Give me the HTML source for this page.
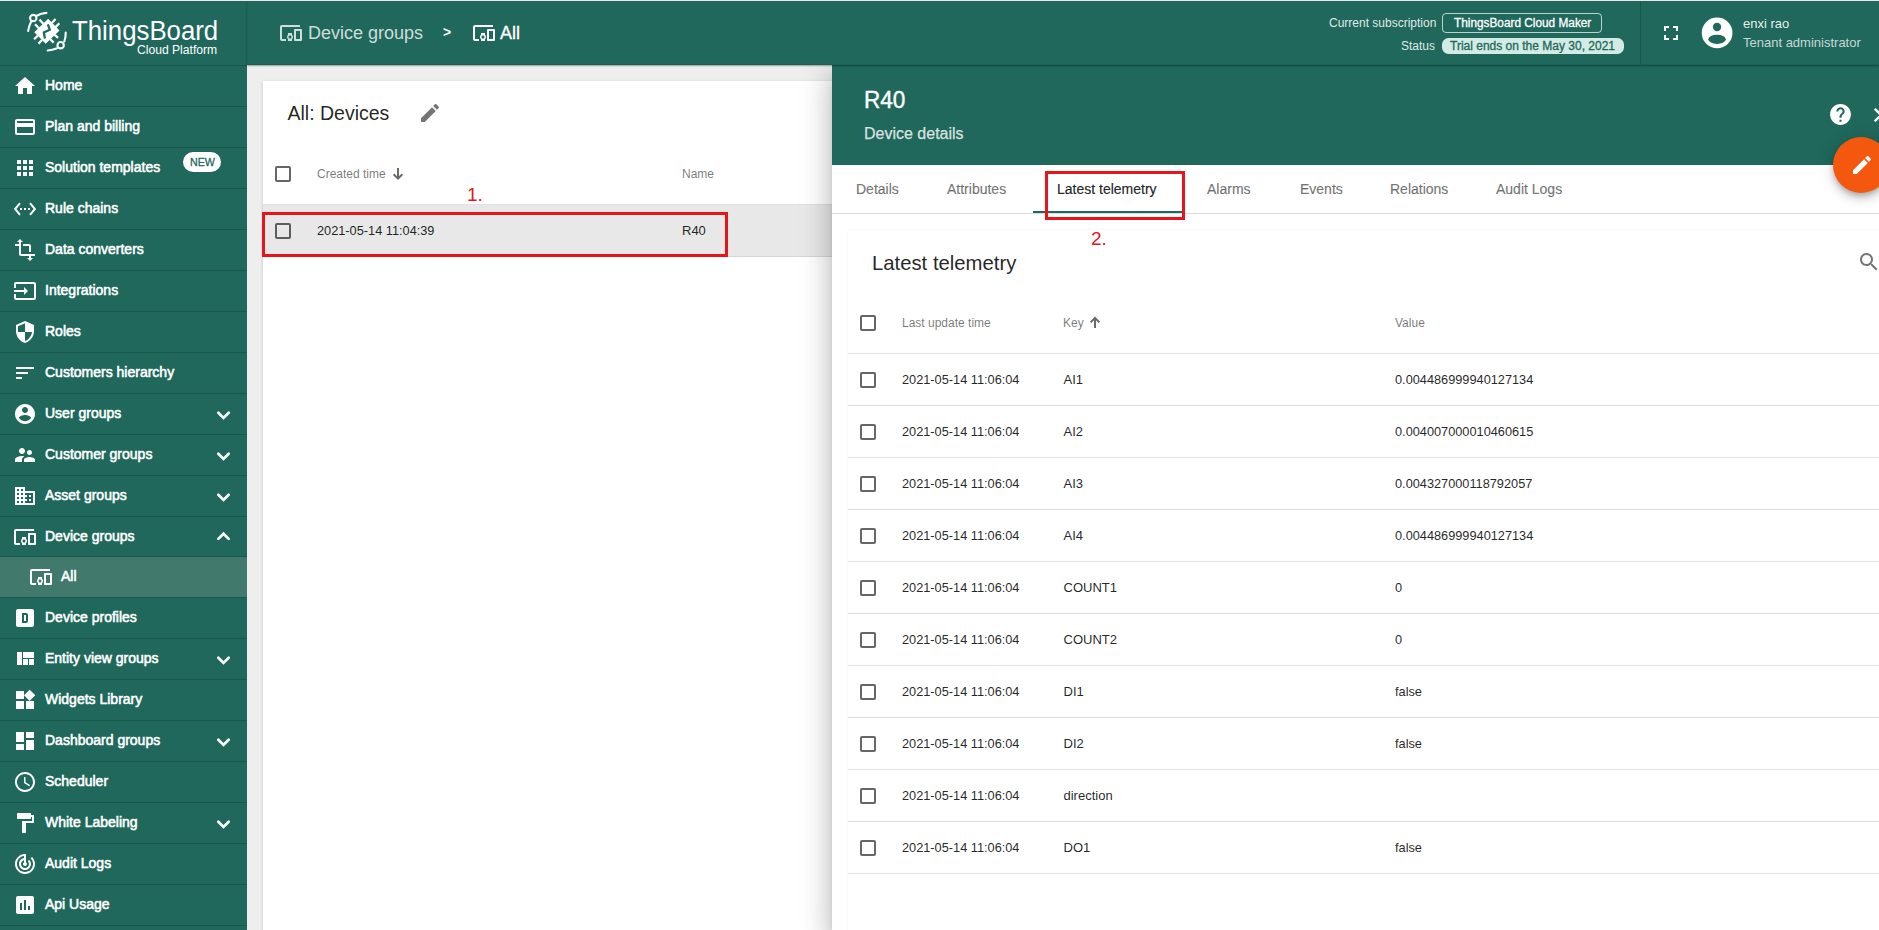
<!DOCTYPE html>
<html><head><meta charset="utf-8">
<style>
*{box-sizing:border-box;margin:0;padding:0}
html,body{width:1879px;height:930px;overflow:hidden;background:#eeeeee;font-family:"Liberation Sans",sans-serif;position:relative}
.tx{position:absolute;line-height:1;white-space:nowrap}
.ic{position:absolute;display:block}
.bx{position:absolute}
</style></head>
<body>

<div class="bx" style="left:0;top:65px;width:247px;height:865px;background:#1f685b"></div>
<svg class="ic" style="left:13px;top:73.5px;width:24px;height:24px;" viewBox="0 0 24 24"><path fill="#fff" fill-rule="evenodd" d="M10 20v-6h4v6h5v-8h3L12 3 2 12h3v8z"/></svg>
<div class="tx" style="left:45px;top:78.35px;font-size:14px;color:#fff;-webkit-text-stroke:0.55px #fff;">Home</div>
<div class="bx" style="left:0;top:65px;width:247px;height:1px;background:#19574c"></div>
<svg class="ic" style="left:13px;top:114.5px;width:24px;height:24px;" viewBox="0 0 24 24"><path fill="#fff" fill-rule="evenodd" d="M20 4H4c-1.11 0-1.99.89-1.99 2L2 18c0 1.11.89 2 2 2h16c1.11 0 2-.89 2-2V6c0-1.11-.89-2-2-2zm0 14H4v-6h16v6zm0-10H4V6h16v2z"/></svg>
<div class="tx" style="left:45px;top:119.35px;font-size:14px;color:#fff;-webkit-text-stroke:0.55px #fff;">Plan and billing</div>
<div class="bx" style="left:0;top:106px;width:247px;height:1px;background:#19574c"></div>
<svg class="ic" style="left:13px;top:155.5px;width:24px;height:24px;" viewBox="0 0 24 24"><path fill="#fff" fill-rule="evenodd" d="M4 8h4V4H4v4zm6 12h4v-4h-4v4zm-6 0h4v-4H4v4zm0-6h4v-4H4v4zm6 0h4v-4h-4v4zm6-10v4h4V4h-4zm-6 4h4V4h-4v4zm6 6h4v-4h-4v4zm0 6h4v-4h-4v4z"/></svg>
<div class="tx" style="left:45px;top:160.35px;font-size:14px;color:#fff;-webkit-text-stroke:0.55px #fff;">Solution templates</div>
<div class="bx" style="left:0;top:147px;width:247px;height:1px;background:#19574c"></div>
<div class="bx" style="left:183px;top:152px;width:38px;height:20px;background:#fff;border-radius:10px"></div>
<div class="tx" style="left:190px;top:157.07px;font-size:11.5px;color:#1f685b;-webkit-text-stroke:0.3px #1f685b;transform:scaleX(0.93);transform-origin:0 0;">NEW</div>
<svg class="ic" style="left:13px;top:196.5px;width:24px;height:24px;" viewBox="0 0 24 24"><path fill="#fff" fill-rule="evenodd" d="M7.77 6.76L6.23 5.48.82 12l5.41 6.52 1.54-1.28L3.42 12l4.35-5.24zM7 13h2v-2H7v2zm10-2h-2v2h2v-2zm-6 2h2v-2h-2v2zm6.77-7.52l-1.54 1.28L20.58 12l-4.35 5.24 1.54 1.28L23.18 12l-5.41-6.52z"/></svg>
<div class="tx" style="left:45px;top:201.35px;font-size:14px;color:#fff;-webkit-text-stroke:0.55px #fff;">Rule chains</div>
<div class="bx" style="left:0;top:188px;width:247px;height:1px;background:#19574c"></div>
<svg class="ic" style="left:13px;top:237.5px;width:24px;height:24px;" viewBox="0 0 24 24"><path fill="#fff" fill-rule="evenodd" d="M22 18v-2H8V4h2L7 1 4 4h2v2H2v2h4v8c0 1.1.9 2 2 2h8v2h-2l3 3 3-3h-2v-2h4zM10 8h6v6h2V8c0-1.1-.9-2-2-2h-6v2z"/></svg>
<div class="tx" style="left:45px;top:242.35px;font-size:14px;color:#fff;-webkit-text-stroke:0.55px #fff;">Data converters</div>
<div class="bx" style="left:0;top:229px;width:247px;height:1px;background:#19574c"></div>
<svg class="ic" style="left:13px;top:278.5px;width:24px;height:24px;" viewBox="0 0 24 24"><path fill="#fff" fill-rule="evenodd" d="M21 3.01H3c-1.1 0-2 .9-2 2V9h2V4.99h18v14.03H3V15H1v4.01c0 1.1.9 1.98 2 1.98h18c1.1 0 2-.88 2-1.98v-14c0-1.11-.9-2-2-2zM11 16l4-4-4-4v3H1v2h10v3z"/></svg>
<div class="tx" style="left:45px;top:283.35px;font-size:14px;color:#fff;-webkit-text-stroke:0.55px #fff;">Integrations</div>
<div class="bx" style="left:0;top:270px;width:247px;height:1px;background:#19574c"></div>
<svg class="ic" style="left:13px;top:319.5px;width:24px;height:24px;" viewBox="0 0 24 24"><path fill="#fff" fill-rule="evenodd" d="M12 1L3 5v6c0 5.55 3.84 10.74 9 12 5.16-1.26 9-6.45 9-12V5l-9-4zm0 10.99h7c-.53 4.12-3.28 7.79-7 8.94V12H5V6.3l7-3.11v8.8z"/></svg>
<div class="tx" style="left:45px;top:324.35px;font-size:14px;color:#fff;-webkit-text-stroke:0.55px #fff;">Roles</div>
<div class="bx" style="left:0;top:311px;width:247px;height:1px;background:#19574c"></div>
<svg class="ic" style="left:13px;top:360.5px;width:24px;height:24px;" viewBox="0 0 24 24"><path fill="#fff" fill-rule="evenodd" d="M3 18h6v-2H3v2zM3 6v2h18V6H3zm0 7h12v-2H3v2z"/></svg>
<div class="tx" style="left:45px;top:365.35px;font-size:14px;color:#fff;-webkit-text-stroke:0.55px #fff;">Customers hierarchy</div>
<div class="bx" style="left:0;top:352px;width:247px;height:1px;background:#19574c"></div>
<svg class="ic" style="left:13px;top:401.5px;width:24px;height:24px;" viewBox="0 0 24 24"><path fill="#fff" fill-rule="evenodd" d="M12 2C6.48 2 2 6.48 2 12s4.48 10 10 10 10-4.48 10-10S17.52 2 12 2zm0 3c1.66 0 3 1.34 3 3s-1.34 3-3 3-3-1.34-3-3 1.34-3 3-3zm0 14.2c-2.5 0-4.71-1.28-6-3.22.03-1.99 4-3.08 6-3.08 1.99 0 5.97 1.09 6 3.08-1.29 1.94-3.5 3.22-6 3.22z"/></svg>
<div class="tx" style="left:45px;top:406.35px;font-size:14px;color:#fff;-webkit-text-stroke:0.55px #fff;">User groups</div>
<div class="bx" style="left:0;top:393px;width:247px;height:1px;background:#19574c"></div>
<svg class="ic" style="left:211px;top:401.5px;width:24px;height:24px" viewBox="0 0 24 24"><polyline points="7.3,10.7 12.5,15.9 17.7,10.7" fill="none" stroke="#fff" stroke-width="2.7" stroke-linecap="round" stroke-linejoin="miter"/></svg>
<svg class="ic" style="left:13px;top:442.5px;width:24px;height:24px;" viewBox="0 0 24 24"><path fill="#fff" fill-rule="evenodd" d="M16.5 12c1.38 0 2.49-1.12 2.49-2.5S17.88 7 16.5 7C15.12 7 14 8.12 14 9.5s1.12 2.5 2.5 2.5zM9 11c1.66 0 2.99-1.34 2.99-3S10.66 5 9 5C7.34 5 6 6.34 6 8s1.34 3 3 3zm7.5 3c-1.83 0-5.5.92-5.5 2.75V19h11v-2.25c0-1.83-3.67-2.75-5.5-2.75zM9 13c-2.33 0-7 1.17-7 3.5V19h7v-2.25c0-.85.33-2.34 2.37-3.47C10.5 13.1 9.66 13 9 13z"/></svg>
<div class="tx" style="left:45px;top:447.35px;font-size:14px;color:#fff;-webkit-text-stroke:0.55px #fff;">Customer groups</div>
<div class="bx" style="left:0;top:434px;width:247px;height:1px;background:#19574c"></div>
<svg class="ic" style="left:211px;top:442.5px;width:24px;height:24px" viewBox="0 0 24 24"><polyline points="7.3,10.7 12.5,15.9 17.7,10.7" fill="none" stroke="#fff" stroke-width="2.7" stroke-linecap="round" stroke-linejoin="miter"/></svg>
<svg class="ic" style="left:13px;top:483.5px;width:24px;height:24px;" viewBox="0 0 24 24"><path fill="#fff" fill-rule="evenodd" d="M12 7V3H2v18h20V7H12zM6 19H4v-2h2v2zm0-4H4v-2h2v2zm0-4H4V9h2v2zm0-4H4V5h2v2zm4 12H8v-2h2v2zm0-4H8v-2h2v2zm0-4H8V9h2v2zm0-4H8V5h2v2zm10 12h-8v-2h2v-2h-2v-2h2v-2h-2V9h8v10zm-2-8h-2v2h2v-2zm0 4h-2v2h2v-2z"/></svg>
<div class="tx" style="left:45px;top:488.35px;font-size:14px;color:#fff;-webkit-text-stroke:0.55px #fff;">Asset groups</div>
<div class="bx" style="left:0;top:475px;width:247px;height:1px;background:#19574c"></div>
<svg class="ic" style="left:211px;top:483.5px;width:24px;height:24px" viewBox="0 0 24 24"><polyline points="7.3,10.7 12.5,15.9 17.7,10.7" fill="none" stroke="#fff" stroke-width="2.7" stroke-linecap="round" stroke-linejoin="miter"/></svg>
<svg class="ic" style="left:13px;top:524.5px;width:24px;height:24px;" viewBox="0 0 24 24"><path fill="#fff" fill-rule="evenodd" d="M3 6h18V4H3c-1.1 0-2 .9-2 2v12c0 1.1.9 2 2 2h4v-2H3V6zm10 6H9v1.78c-.61.55-1 1.33-1 2.22s.39 1.67 1 2.22V20h4v-1.78c.61-.55 1-1.34 1-2.22s-.39-1.67-1-2.22V12zm-2 5.5c-.83 0-1.5-.67-1.5-1.5s.67-1.5 1.5-1.5 1.5.67 1.5 1.5-.67 1.5-1.5 1.5zM22 8h-6c-.5 0-1 .5-1 1v10c0 .5.5 1 1 1h6c.5 0 1-.5 1-1V9c0-.5-.5-1-1-1zm-1 10h-4v-8h4v8z"/></svg>
<div class="tx" style="left:45px;top:529.35px;font-size:14px;color:#fff;-webkit-text-stroke:0.55px #fff;">Device groups</div>
<div class="bx" style="left:0;top:516px;width:247px;height:1px;background:#19574c"></div>
<svg class="ic" style="left:211px;top:524.5px;width:24px;height:24px" viewBox="0 0 24 24"><polyline points="7.3,13.9 12.5,8.7 17.7,13.9" fill="none" stroke="#fff" stroke-width="2.7" stroke-linecap="round" stroke-linejoin="miter"/></svg>
<div class="bx" style="left:0;top:557px;width:247px;height:40px;background:#41796d"></div>
<svg class="ic" style="left:28.5px;top:564.5px;width:24px;height:24px;" viewBox="0 0 24 24"><path fill="#fff" fill-rule="evenodd" d="M3 6h18V4H3c-1.1 0-2 .9-2 2v12c0 1.1.9 2 2 2h4v-2H3V6zm10 6H9v1.78c-.61.55-1 1.33-1 2.22s.39 1.67 1 2.22V20h4v-1.78c.61-.55 1-1.34 1-2.22s-.39-1.67-1-2.22V12zm-2 5.5c-.83 0-1.5-.67-1.5-1.5s.67-1.5 1.5-1.5 1.5.67 1.5 1.5-.67 1.5-1.5 1.5zM22 8h-6c-.5 0-1 .5-1 1v10c0 .5.5 1 1 1h6c.5 0 1-.5 1-1V9c0-.5-.5-1-1-1zm-1 10h-4v-8h4v8z"/></svg>
<div class="tx" style="left:61px;top:569.15px;font-size:14px;color:#fff;-webkit-text-stroke:0.55px #fff;">All</div>
<div class="bx" style="left:0;top:556px;width:247px;height:1px;background:#19574c"></div>
<svg class="ic" style="left:13px;top:605.5px;width:24px;height:24px;" viewBox="0 0 24 24"><path fill="#fff" fill-rule="evenodd" d="M5 3h14a2 2 0 0 1 2 2v14a2 2 0 0 1-2 2H5a2 2 0 0 1-2-2V5a2 2 0 0 1 2-2zM9 7v10h4a2 2 0 0 0 2-2V9a2 2 0 0 0-2-2H9zm2 2h2v6h-2V9z"/></svg>
<div class="tx" style="left:45px;top:610.35px;font-size:14px;color:#fff;-webkit-text-stroke:0.55px #fff;">Device profiles</div>
<div class="bx" style="left:0;top:597px;width:247px;height:1px;background:#19574c"></div>
<svg class="ic" style="left:13px;top:646.5px;width:24px;height:24px;" viewBox="0 0 24 24"><path fill="#fff" fill-rule="evenodd" d="M10 18h5v-6h-5v6zm-6 0h5V5H4v13zm12 0h5v-6h-5v6zM10 5v6h11V5H10z"/></svg>
<div class="tx" style="left:45px;top:651.35px;font-size:14px;color:#fff;-webkit-text-stroke:0.55px #fff;">Entity view groups</div>
<div class="bx" style="left:0;top:638px;width:247px;height:1px;background:#19574c"></div>
<svg class="ic" style="left:211px;top:646.5px;width:24px;height:24px" viewBox="0 0 24 24"><polyline points="7.3,10.7 12.5,15.9 17.7,10.7" fill="none" stroke="#fff" stroke-width="2.7" stroke-linecap="round" stroke-linejoin="miter"/></svg>
<svg class="ic" style="left:13px;top:687.5px;width:24px;height:24px;" viewBox="0 0 24 24"><path fill="#fff" fill-rule="evenodd" d="M13 13v8h8v-8h-8zM3 21h8v-8H3v8zM3 3v8h8V3H3zm13.66-1.31L11 7.34 16.66 13l5.66-5.66-5.66-5.65z"/></svg>
<div class="tx" style="left:45px;top:692.35px;font-size:14px;color:#fff;-webkit-text-stroke:0.55px #fff;">Widgets Library</div>
<div class="bx" style="left:0;top:679px;width:247px;height:1px;background:#19574c"></div>
<svg class="ic" style="left:13px;top:728.5px;width:24px;height:24px;" viewBox="0 0 24 24"><path fill="#fff" fill-rule="evenodd" d="M3 13h8V3H3v10zm0 8h8v-6H3v6zm10 0h8V11h-8v10zm0-18v6h8V3h-8z"/></svg>
<div class="tx" style="left:45px;top:733.35px;font-size:14px;color:#fff;-webkit-text-stroke:0.55px #fff;">Dashboard groups</div>
<div class="bx" style="left:0;top:720px;width:247px;height:1px;background:#19574c"></div>
<svg class="ic" style="left:211px;top:728.5px;width:24px;height:24px" viewBox="0 0 24 24"><polyline points="7.3,10.7 12.5,15.9 17.7,10.7" fill="none" stroke="#fff" stroke-width="2.7" stroke-linecap="round" stroke-linejoin="miter"/></svg>
<svg class="ic" style="left:13px;top:769.5px;width:24px;height:24px;" viewBox="0 0 24 24"><path fill="#fff" fill-rule="evenodd" d="M11.99 2C6.47 2 2 6.48 2 12s4.47 10 9.99 10C17.52 22 22 17.52 22 12S17.52 2 11.99 2zM12 20c-4.42 0-8-3.58-8-8s3.58-8 8-8 8 3.58 8 8-3.58 8-8 8zm.5-13H11v6l5.25 3.15.75-1.23-4.5-2.67z"/></svg>
<div class="tx" style="left:45px;top:774.35px;font-size:14px;color:#fff;-webkit-text-stroke:0.55px #fff;">Scheduler</div>
<div class="bx" style="left:0;top:761px;width:247px;height:1px;background:#19574c"></div>
<svg class="ic" style="left:13px;top:810.5px;width:24px;height:24px;" viewBox="0 0 24 24"><path fill="#fff" fill-rule="evenodd" d="M18 4V3c0-.55-.45-1-1-1H5c-.55 0-1 .45-1 1v4c0 .55.45 1 1 1h12c.55 0 1-.45 1-1V6h1v4H9v11c0 .55.45 1 1 1h2c.55 0 1-.45 1-1v-9h8V4h-3z"/></svg>
<div class="tx" style="left:45px;top:815.35px;font-size:14px;color:#fff;-webkit-text-stroke:0.55px #fff;">White Labeling</div>
<div class="bx" style="left:0;top:802px;width:247px;height:1px;background:#19574c"></div>
<svg class="ic" style="left:211px;top:810.5px;width:24px;height:24px" viewBox="0 0 24 24"><polyline points="7.3,10.7 12.5,15.9 17.7,10.7" fill="none" stroke="#fff" stroke-width="2.7" stroke-linecap="round" stroke-linejoin="miter"/></svg>
<svg class="ic" style="left:13px;top:851.5px;width:24px;height:24px;" viewBox="0 0 24 24"><path fill="#fff" fill-rule="evenodd" d="M19.07 4.93l-1.41 1.41C19.1 7.79 20 9.79 20 12c0 4.42-3.58 8-8 8s-8-3.58-8-8c0-4.08 3.05-7.44 7-7.93v2.02C8.16 6.57 6 9.03 6 12c0 3.31 2.69 6 6 6s6-2.69 6-6c0-1.66-.67-3.16-1.76-4.24l-1.41 1.41C15.55 9.9 16 10.9 16 12c0 2.21-1.79 4-4 4s-4-1.79-4-4c0-1.86 1.28-3.41 3-3.86v2.14c-.6.35-1 .98-1 1.72 0 1.1.9 2 2 2s2-.9 2-2c0-.74-.4-1.38-1-1.72V2h-1C6.48 2 2 6.48 2 12s4.48 10 10 10 10-4.48 10-10c0-2.76-1.12-5.26-2.93-7.07z"/></svg>
<div class="tx" style="left:45px;top:856.35px;font-size:14px;color:#fff;-webkit-text-stroke:0.55px #fff;">Audit Logs</div>
<div class="bx" style="left:0;top:843px;width:247px;height:1px;background:#19574c"></div>
<svg class="ic" style="left:13px;top:892.5px;width:24px;height:24px;" viewBox="0 0 24 24"><path fill="#fff" fill-rule="evenodd" d="M19 3H5c-1.1 0-2 .9-2 2v14c0 1.1.9 2 2 2h14c1.1 0 2-.9 2-2V5c0-1.1-.9-2-2-2zM9 17H7v-7h2v7zm4 0h-2V7h2v10zm4 0h-2v-4h2v4z"/></svg>
<div class="tx" style="left:45px;top:897.35px;font-size:14px;color:#fff;-webkit-text-stroke:0.55px #fff;">Api Usage</div>
<div class="bx" style="left:0;top:884px;width:247px;height:1px;background:#19574c"></div>
<div class="bx" style="left:0;top:925px;width:247px;height:1px;background:#19574c"></div>
<div class="bx" style="left:263px;top:81px;width:1640px;height:900px;background:#fff;box-shadow:0 1px 3px rgba(0,0,0,0.2)"></div>
<div class="tx" style="left:287.5px;top:104.49px;font-size:19.5px;color:rgba(0,0,0,0.87);font-weight:normal;">All: Devices</div>
<svg class="ic" style="left:418px;top:100.8px;width:24px;height:24px;" viewBox="0 0 24 24"><path fill="rgba(0,0,0,0.54)" fill-rule="evenodd" d="M3 17.25V21h3.75L17.81 9.94l-3.75-3.75L3 17.25zM20.71 7.04c.39-.39.39-1.02 0-1.41l-2.34-2.34c-.39-.39-1.02-.39-1.41 0l-1.83 1.83 3.75 3.75 1.83-1.83z"/></svg>
<div class="bx" style="left:275px;top:166px;width:16px;height:16px;border:2px solid rgba(0,0,0,0.6);border-radius:2px"></div>
<div class="tx" style="left:317px;top:167.54px;font-size:12px;color:rgba(0,0,0,0.54);font-weight:normal;">Created time</div>
<svg class="ic" style="left:390px;top:165.4px;width:16px;height:16px" viewBox="0 0 16 16"><g fill="none" stroke="#6b6b6b" stroke-width="2"><path d="M8 3V13"/><path d="M3.6 9.2L8 13.6L12.4 9.2"/></g></svg>
<div class="tx" style="left:682px;top:167.54px;font-size:12px;color:rgba(0,0,0,0.54);font-weight:normal;">Name</div>
<div class="bx" style="left:263px;top:204px;width:1640px;height:1px;background:#e0e0e0"></div>
<div class="bx" style="left:263px;top:205px;width:1640px;height:51px;background:#e8e8e8"></div>
<div class="bx" style="left:263px;top:256px;width:1640px;height:1px;background:#d6d6d6"></div>
<div class="bx" style="left:275px;top:223px;width:16px;height:16px;border:2px solid rgba(0,0,0,0.6);border-radius:2px"></div>
<div class="tx" style="left:317px;top:224.81px;font-size:12.75px;color:rgba(0,0,0,0.87);font-weight:normal;">2021-05-14 11:04:39</div>
<div class="tx" style="left:682px;top:224.00px;font-size:13px;color:rgba(0,0,0,0.87);font-weight:normal;">R40</div>
<div class="bx" style="left:262px;top:212px;width:466px;height:45px;border:3px solid #e8141c"></div>
<div class="tx" style="left:467px;top:184.72px;font-size:19px;color:#e8141c;font-weight:normal;">1.</div>
<div class="bx" style="left:832px;top:65px;width:1100px;height:865px;background:#fff;box-shadow:0 8px 10px -5px rgba(0,0,0,.2),0 16px 24px 2px rgba(0,0,0,.14),0 6px 30px 5px rgba(0,0,0,.12)"></div>
<div class="bx" style="left:832px;top:65px;width:1047px;height:100px;background:#1f685b"></div>
<div class="tx" style="left:864px;top:88.53px;font-size:23px;color:#fff;-webkit-text-stroke:0.4px #fff;transform:scaleX(0.98);transform-origin:0 0;">R40</div>
<div class="tx" style="left:864px;top:126.26px;font-size:16px;color:rgba(255,255,255,0.8);-webkit-text-stroke:0.25px rgba(255,255,255,0.8);">Device details</div>
<svg class="ic" style="left:1828px;top:102px;width:25px;height:25px;" viewBox="0 0 24 24"><path fill="#fff" fill-rule="evenodd" d="M12 2C6.48 2 2 6.48 2 12s4.48 10 10 10 10-4.48 10-10S17.52 2 12 2zm1 17h-2v-2h2v2zm2.07-7.75l-.9.92C13.45 12.9 13 13.5 13 15h-2v-.5c0-1.1.45-2.1 1.17-2.83l1.24-1.26c.37-.36.59-.86.59-1.41 0-1.1-.9-2-2-2s-2 .9-2 2H8c0-2.21 1.79-4 4-4s4 1.79 4 4c0 .88-.36 1.68-.93 2.25z"/></svg>
<svg class="ic" style="left:1868.5px;top:103px;width:24px;height:24px" viewBox="0 0 24 24"><g stroke="#fff" stroke-width="2.3"><path d="M5.7 5.7L18.3 18.3"/><path d="M18.3 5.7L5.7 18.3"/></g></svg>
<div class="bx" style="left:1833px;top:137px;width:56px;height:56px;border-radius:50%;background:#f4580f;box-shadow:0 3px 5px -1px rgba(0,0,0,.2),0 6px 10px 0 rgba(0,0,0,.14),0 1px 18px 0 rgba(0,0,0,.12)"></div>
<svg class="ic" style="left:1850px;top:153px;width:24px;height:24px;" viewBox="0 0 24 24"><path fill="#fff" fill-rule="evenodd" d="M3 17.25V21h3.75L17.81 9.94l-3.75-3.75L3 17.25zM20.71 7.04c.39-.39.39-1.02 0-1.41l-2.34-2.34c-.39-.39-1.02-.39-1.41 0l-1.83 1.83 3.75 3.75 1.83-1.83z"/></svg>
<div class="tx" style="left:856px;top:182.45px;font-size:14px;color:rgba(0,0,0,0.54);-webkit-text-stroke:0.2px rgba(0,0,0,0.54);">Details</div>
<div class="tx" style="left:947px;top:182.45px;font-size:14px;color:rgba(0,0,0,0.54);-webkit-text-stroke:0.2px rgba(0,0,0,0.54);">Attributes</div>
<div class="tx" style="left:1057px;top:182.45px;font-size:14px;color:rgba(0,0,0,0.87);-webkit-text-stroke:0.2px rgba(0,0,0,0.87);">Latest telemetry</div>
<div class="tx" style="left:1207px;top:182.45px;font-size:14px;color:rgba(0,0,0,0.54);-webkit-text-stroke:0.2px rgba(0,0,0,0.54);">Alarms</div>
<div class="tx" style="left:1300px;top:182.45px;font-size:14px;color:rgba(0,0,0,0.54);-webkit-text-stroke:0.2px rgba(0,0,0,0.54);">Events</div>
<div class="tx" style="left:1390px;top:182.45px;font-size:14px;color:rgba(0,0,0,0.54);-webkit-text-stroke:0.2px rgba(0,0,0,0.54);">Relations</div>
<div class="tx" style="left:1496px;top:182.45px;font-size:14px;color:rgba(0,0,0,0.54);-webkit-text-stroke:0.2px rgba(0,0,0,0.54);">Audit Logs</div>
<div class="bx" style="left:832px;top:213px;width:1047px;height:1px;background:#dcdcdc"></div>
<div class="bx" style="left:1033px;top:211px;width:150px;height:2px;background:#1f685b"></div>
<div class="bx" style="left:1045px;top:171px;width:140px;height:49px;border:3px solid #e8141c"></div>
<div class="bx" style="left:848px;top:230px;width:1100px;height:760px;background:#fff;box-shadow:0 0 1.5px rgba(0,0,0,0.09)"></div>
<div class="tx" style="left:872px;top:252.62px;font-size:20.3px;color:rgba(0,0,0,0.87);font-weight:normal;">Latest telemetry</div>
<svg class="ic" style="left:1857px;top:250px;width:24px;height:24px;" viewBox="0 0 24 24"><path fill="rgba(0,0,0,0.54)" fill-rule="evenodd" d="M15.5 14h-.79l-.28-.27C15.41 12.59 16 11.11 16 9.5 16 5.91 13.09 3 9.5 3S3 5.91 3 9.5 5.91 16 9.5 16c1.61 0 3.09-.59 4.23-1.57l.27.28v.79l5 4.99L20.49 19l-4.99-5zm-6 0C7.01 14 5 11.99 5 9.5S7.01 5 9.5 5 14 7.01 14 9.5 11.99 14 9.5 14z"/></svg>
<div class="bx" style="left:860px;top:315px;width:16px;height:16px;border:2px solid rgba(0,0,0,0.6);border-radius:2px"></div>
<div class="tx" style="left:902px;top:316.84px;font-size:12px;color:rgba(0,0,0,0.54);font-weight:normal;">Last update time</div>
<div class="tx" style="left:1063px;top:316.84px;font-size:12px;color:rgba(0,0,0,0.54);font-weight:normal;">Key</div>
<svg class="ic" style="left:1087px;top:314px;width:16px;height:16px" viewBox="0 0 16 16"><g fill="none" stroke="#6b6b6b" stroke-width="2"><path d="M8 4V14"/><path d="M3.6 8.4L8 4L12.4 8.4"/></g></svg>
<div class="tx" style="left:1395px;top:316.84px;font-size:12px;color:rgba(0,0,0,0.54);font-weight:normal;">Value</div>
<div class="bx" style="left:848px;top:353px;width:1100px;height:1px;background:#e0e0e0"></div>
<div class="bx" style="left:860px;top:372px;width:16px;height:16px;border:2px solid rgba(0,0,0,0.6);border-radius:2px"></div>
<div class="tx" style="left:902px;top:373.61px;font-size:12.75px;color:rgba(0,0,0,0.87);font-weight:normal;">2021-05-14 11:06:04</div>
<div class="tx" style="left:1063.5px;top:372.80px;font-size:13px;color:rgba(0,0,0,0.87);font-weight:normal;">AI1</div>
<div class="tx" style="left:1395px;top:373.61px;font-size:12.75px;color:rgba(0,0,0,0.87);font-weight:normal;">0.004486999940127134</div>
<div class="bx" style="left:848px;top:405px;width:1100px;height:1px;background:#e0e0e0"></div>
<div class="bx" style="left:860px;top:424px;width:16px;height:16px;border:2px solid rgba(0,0,0,0.6);border-radius:2px"></div>
<div class="tx" style="left:902px;top:425.61px;font-size:12.75px;color:rgba(0,0,0,0.87);font-weight:normal;">2021-05-14 11:06:04</div>
<div class="tx" style="left:1063.5px;top:424.80px;font-size:13px;color:rgba(0,0,0,0.87);font-weight:normal;">AI2</div>
<div class="tx" style="left:1395px;top:425.61px;font-size:12.75px;color:rgba(0,0,0,0.87);font-weight:normal;">0.004007000010460615</div>
<div class="bx" style="left:848px;top:457px;width:1100px;height:1px;background:#e0e0e0"></div>
<div class="bx" style="left:860px;top:476px;width:16px;height:16px;border:2px solid rgba(0,0,0,0.6);border-radius:2px"></div>
<div class="tx" style="left:902px;top:477.61px;font-size:12.75px;color:rgba(0,0,0,0.87);font-weight:normal;">2021-05-14 11:06:04</div>
<div class="tx" style="left:1063.5px;top:476.80px;font-size:13px;color:rgba(0,0,0,0.87);font-weight:normal;">AI3</div>
<div class="tx" style="left:1395px;top:477.61px;font-size:12.75px;color:rgba(0,0,0,0.87);font-weight:normal;">0.004327000118792057</div>
<div class="bx" style="left:848px;top:509px;width:1100px;height:1px;background:#e0e0e0"></div>
<div class="bx" style="left:860px;top:528px;width:16px;height:16px;border:2px solid rgba(0,0,0,0.6);border-radius:2px"></div>
<div class="tx" style="left:902px;top:529.61px;font-size:12.75px;color:rgba(0,0,0,0.87);font-weight:normal;">2021-05-14 11:06:04</div>
<div class="tx" style="left:1063.5px;top:528.80px;font-size:13px;color:rgba(0,0,0,0.87);font-weight:normal;">AI4</div>
<div class="tx" style="left:1395px;top:529.61px;font-size:12.75px;color:rgba(0,0,0,0.87);font-weight:normal;">0.004486999940127134</div>
<div class="bx" style="left:848px;top:561px;width:1100px;height:1px;background:#e0e0e0"></div>
<div class="bx" style="left:860px;top:580px;width:16px;height:16px;border:2px solid rgba(0,0,0,0.6);border-radius:2px"></div>
<div class="tx" style="left:902px;top:581.61px;font-size:12.75px;color:rgba(0,0,0,0.87);font-weight:normal;">2021-05-14 11:06:04</div>
<div class="tx" style="left:1063.5px;top:580.80px;font-size:13px;color:rgba(0,0,0,0.87);font-weight:normal;">COUNT1</div>
<div class="tx" style="left:1395px;top:581.61px;font-size:12.75px;color:rgba(0,0,0,0.87);font-weight:normal;">0</div>
<div class="bx" style="left:848px;top:613px;width:1100px;height:1px;background:#e0e0e0"></div>
<div class="bx" style="left:860px;top:632px;width:16px;height:16px;border:2px solid rgba(0,0,0,0.6);border-radius:2px"></div>
<div class="tx" style="left:902px;top:633.61px;font-size:12.75px;color:rgba(0,0,0,0.87);font-weight:normal;">2021-05-14 11:06:04</div>
<div class="tx" style="left:1063.5px;top:632.80px;font-size:13px;color:rgba(0,0,0,0.87);font-weight:normal;">COUNT2</div>
<div class="tx" style="left:1395px;top:633.61px;font-size:12.75px;color:rgba(0,0,0,0.87);font-weight:normal;">0</div>
<div class="bx" style="left:848px;top:665px;width:1100px;height:1px;background:#e0e0e0"></div>
<div class="bx" style="left:860px;top:684px;width:16px;height:16px;border:2px solid rgba(0,0,0,0.6);border-radius:2px"></div>
<div class="tx" style="left:902px;top:685.61px;font-size:12.75px;color:rgba(0,0,0,0.87);font-weight:normal;">2021-05-14 11:06:04</div>
<div class="tx" style="left:1063.5px;top:684.80px;font-size:13px;color:rgba(0,0,0,0.87);font-weight:normal;">DI1</div>
<div class="tx" style="left:1395px;top:685.61px;font-size:12.75px;color:rgba(0,0,0,0.87);font-weight:normal;">false</div>
<div class="bx" style="left:848px;top:717px;width:1100px;height:1px;background:#e0e0e0"></div>
<div class="bx" style="left:860px;top:736px;width:16px;height:16px;border:2px solid rgba(0,0,0,0.6);border-radius:2px"></div>
<div class="tx" style="left:902px;top:737.61px;font-size:12.75px;color:rgba(0,0,0,0.87);font-weight:normal;">2021-05-14 11:06:04</div>
<div class="tx" style="left:1063.5px;top:736.80px;font-size:13px;color:rgba(0,0,0,0.87);font-weight:normal;">DI2</div>
<div class="tx" style="left:1395px;top:737.61px;font-size:12.75px;color:rgba(0,0,0,0.87);font-weight:normal;">false</div>
<div class="bx" style="left:848px;top:769px;width:1100px;height:1px;background:#e0e0e0"></div>
<div class="bx" style="left:860px;top:788px;width:16px;height:16px;border:2px solid rgba(0,0,0,0.6);border-radius:2px"></div>
<div class="tx" style="left:902px;top:789.61px;font-size:12.75px;color:rgba(0,0,0,0.87);font-weight:normal;">2021-05-14 11:06:04</div>
<div class="tx" style="left:1063.5px;top:788.80px;font-size:13px;color:rgba(0,0,0,0.87);font-weight:normal;">direction</div>
<div class="tx" style="left:1395px;top:789.61px;font-size:12.75px;color:rgba(0,0,0,0.87);font-weight:normal;"></div>
<div class="bx" style="left:848px;top:821px;width:1100px;height:1px;background:#e0e0e0"></div>
<div class="bx" style="left:860px;top:840px;width:16px;height:16px;border:2px solid rgba(0,0,0,0.6);border-radius:2px"></div>
<div class="tx" style="left:902px;top:841.61px;font-size:12.75px;color:rgba(0,0,0,0.87);font-weight:normal;">2021-05-14 11:06:04</div>
<div class="tx" style="left:1063.5px;top:840.80px;font-size:13px;color:rgba(0,0,0,0.87);font-weight:normal;">DO1</div>
<div class="tx" style="left:1395px;top:841.61px;font-size:12.75px;color:rgba(0,0,0,0.87);font-weight:normal;">false</div>
<div class="bx" style="left:848px;top:873px;width:1100px;height:1px;background:#e0e0e0"></div>
<div class="bx" style="left:0;top:0;width:1879px;height:1px;background:#ebe7ea"></div>
<div class="bx" style="left:0;top:1px;width:247px;height:64px;background:#1f685b"></div>
<div class="bx" style="left:247px;top:1px;width:1632px;height:64px;background:#1f685b;box-shadow:0 1px 1.5px rgba(0,0,0,0.35)"></div>
<div class="bx" style="left:247px;top:64px;width:1632px;height:1px;background:#1a6154"></div>
<div class="bx" style="left:247px;top:1px;width:1px;height:64px;background:#1d6356"></div>
<div class="bx" style="left:1640px;top:1px;width:1px;height:64px;background:#19574c"></div>
<svg class="ic" style="left:24px;top:8px;width:48px;height:48px" viewBox="0 0 930 930">
 <g fill="none" stroke="#fff" stroke-width="40" stroke-linecap="round">
  <circle cx="180" cy="195" r="62"/>
  <circle cx="710" cy="720" r="62"/>
  <path d="M245,150 Q330,100 435,95"/>
  <path d="M135,270 Q95,350 80,445"/>
  <path d="M780,650 Q812,560 808,475"/>
  <path d="M640,780 Q545,818 460,825"/>
 </g>
 <polygon points="468,208 688,438 420,692 200,468" fill="#fff"/>
 <g stroke="#fff" stroke-width="44">
  <path d="M300,225 L375,305"/><path d="M215,315 L290,395"/>
  <path d="M610,215 L540,290"/><path d="M685,295 L610,370"/>
  <path d="M660,580 L585,510"/><path d="M575,670 L505,600"/>
  <path d="M195,605 L270,535"/><path d="M280,690 L350,620"/>
 </g>
 <path d="M462,318 L500,420 L385,472 L405,592" fill="none" stroke="#1f685b" stroke-width="44"/>
</svg>
<div class="tx" style="left:72px;top:18.34px;font-size:27px;color:#fff;-webkit-text-stroke:0px #fff;transform:scaleX(0.955);transform-origin:0 0;">ThingsBoard</div>
<div class="tx" style="left:137px;top:43.94px;font-size:12px;color:#fff;-webkit-text-stroke:0px #fff;transform:scaleX(1.01);transform-origin:0 0;">Cloud Platform</div>
<svg class="ic" style="left:278.5px;top:21px;width:24px;height:24px;" viewBox="0 0 24 24"><path fill="rgba(255,255,255,0.78)" fill-rule="evenodd" d="M3 6h18V4H3c-1.1 0-2 .9-2 2v12c0 1.1.9 2 2 2h4v-2H3V6zm10 6H9v1.78c-.61.55-1 1.33-1 2.22s.39 1.67 1 2.22V20h4v-1.78c.61-.55 1-1.34 1-2.22s-.39-1.67-1-2.22V12zm-2 5.5c-.83 0-1.5-.67-1.5-1.5s.67-1.5 1.5-1.5 1.5.67 1.5 1.5-.67 1.5-1.5 1.5zM22 8h-6c-.5 0-1 .5-1 1v10c0 .5.5 1 1 1h6c.5 0 1-.5 1-1V9c0-.5-.5-1-1-1zm-1 10h-4v-8h4v8z"/></svg>
<div class="tx" style="left:308px;top:24.26px;font-size:18px;color:rgba(255,255,255,0.78);font-weight:normal;">Device groups</div>
<div class="tx" style="left:443px;top:25.15px;font-size:14px;color:#fff;font-weight:bold;">&gt;</div>
<svg class="ic" style="left:471.5px;top:21px;width:24px;height:24px;" viewBox="0 0 24 24"><path fill="#fff" fill-rule="evenodd" d="M3 6h18V4H3c-1.1 0-2 .9-2 2v12c0 1.1.9 2 2 2h4v-2H3V6zm10 6H9v1.78c-.61.55-1 1.33-1 2.22s.39 1.67 1 2.22V20h4v-1.78c.61-.55 1-1.34 1-2.22s-.39-1.67-1-2.22V12zm-2 5.5c-.83 0-1.5-.67-1.5-1.5s.67-1.5 1.5-1.5 1.5.67 1.5 1.5-.67 1.5-1.5 1.5zM22 8h-6c-.5 0-1 .5-1 1v10c0 .5.5 1 1 1h6c.5 0 1-.5 1-1V9c0-.5-.5-1-1-1zm-1 10h-4v-8h4v8z"/></svg>
<div class="tx" style="left:500px;top:24.26px;font-size:18px;color:#fff;-webkit-text-stroke:0.3px #fff;">All</div>
<div class="tx" style="left:1329px;top:16.84px;font-size:12px;color:rgba(255,255,255,0.88);font-weight:normal;">Current subscription</div>
<div class="bx" style="left:1442px;top:13px;width:160px;height:20px;border:1px solid rgba(255,255,255,0.7);border-radius:4px"></div>
<div class="tx" style="left:1454px;top:16.84px;font-size:12px;color:#fff;-webkit-text-stroke:0.3px #fff;transform:scaleX(0.985);transform-origin:0 0;">ThingsBoard Cloud Maker</div>
<div class="tx" style="left:1401px;top:39.84px;font-size:12px;color:rgba(255,255,255,0.88);font-weight:normal;">Status</div>
<div class="bx" style="left:1442px;top:38px;width:182px;height:16px;background:#d2ebe5;border-radius:6.5px"></div>
<div class="tx" style="left:1450px;top:39.84px;font-size:12px;color:#1f685b;-webkit-text-stroke:0.3px #1f685b;">Trial ends on the May 30, 2021</div>
<svg class="ic" style="left:1659px;top:21px;width:24px;height:24px;" viewBox="0 0 24 24"><path fill="#fff" fill-rule="evenodd" d="M7 14H5v5h5v-2H7v-3zm-2-4h2V7h3V5H5v5zm12 7h-3v2h5v-5h-2v3zM14 5v2h3v3h2V5h-5z"/></svg>
<svg class="ic" style="left:1701px;top:17px;width:32px;height:32px" viewBox="0 0 32 32">
<circle cx="16.1" cy="15.9" r="15.35" fill="#fff"/>
<circle cx="16.05" cy="10" r="4.15" fill="#1f685b"/>
<ellipse cx="16.05" cy="22.3" rx="8.7" ry="4.6" fill="#1f685b"/>
</svg>
<div class="tx" style="left:1743px;top:17.00px;font-size:13px;color:rgba(255,255,255,0.92);font-weight:normal;">enxi rao</div>
<div class="tx" style="left:1743px;top:36.00px;font-size:13px;color:rgba(255,255,255,0.75);font-weight:normal;">Tenant administrator</div>
<svg class="ic" style="left:1870px;top:21px;width:24px;height:24px;" viewBox="0 0 24 24"><path fill="rgba(255,255,255,0.8)" fill-rule="evenodd" d="M12 8c1.1 0 2-.9 2-2s-.9-2-2-2-2 .9-2 2 .9 2 2 2zm0 2c-1.1 0-2 .9-2 2s.9 2 2 2 2-.9 2-2-.9-2-2-2zm0 6c-1.1 0-2 .9-2 2s.9 2 2 2 2-.9 2-2-.9-2-2-2z"/></svg>
<div class="tx" style="left:1091px;top:228.92px;font-size:19px;color:#e8141c;font-weight:normal;">2.</div>
</body></html>
